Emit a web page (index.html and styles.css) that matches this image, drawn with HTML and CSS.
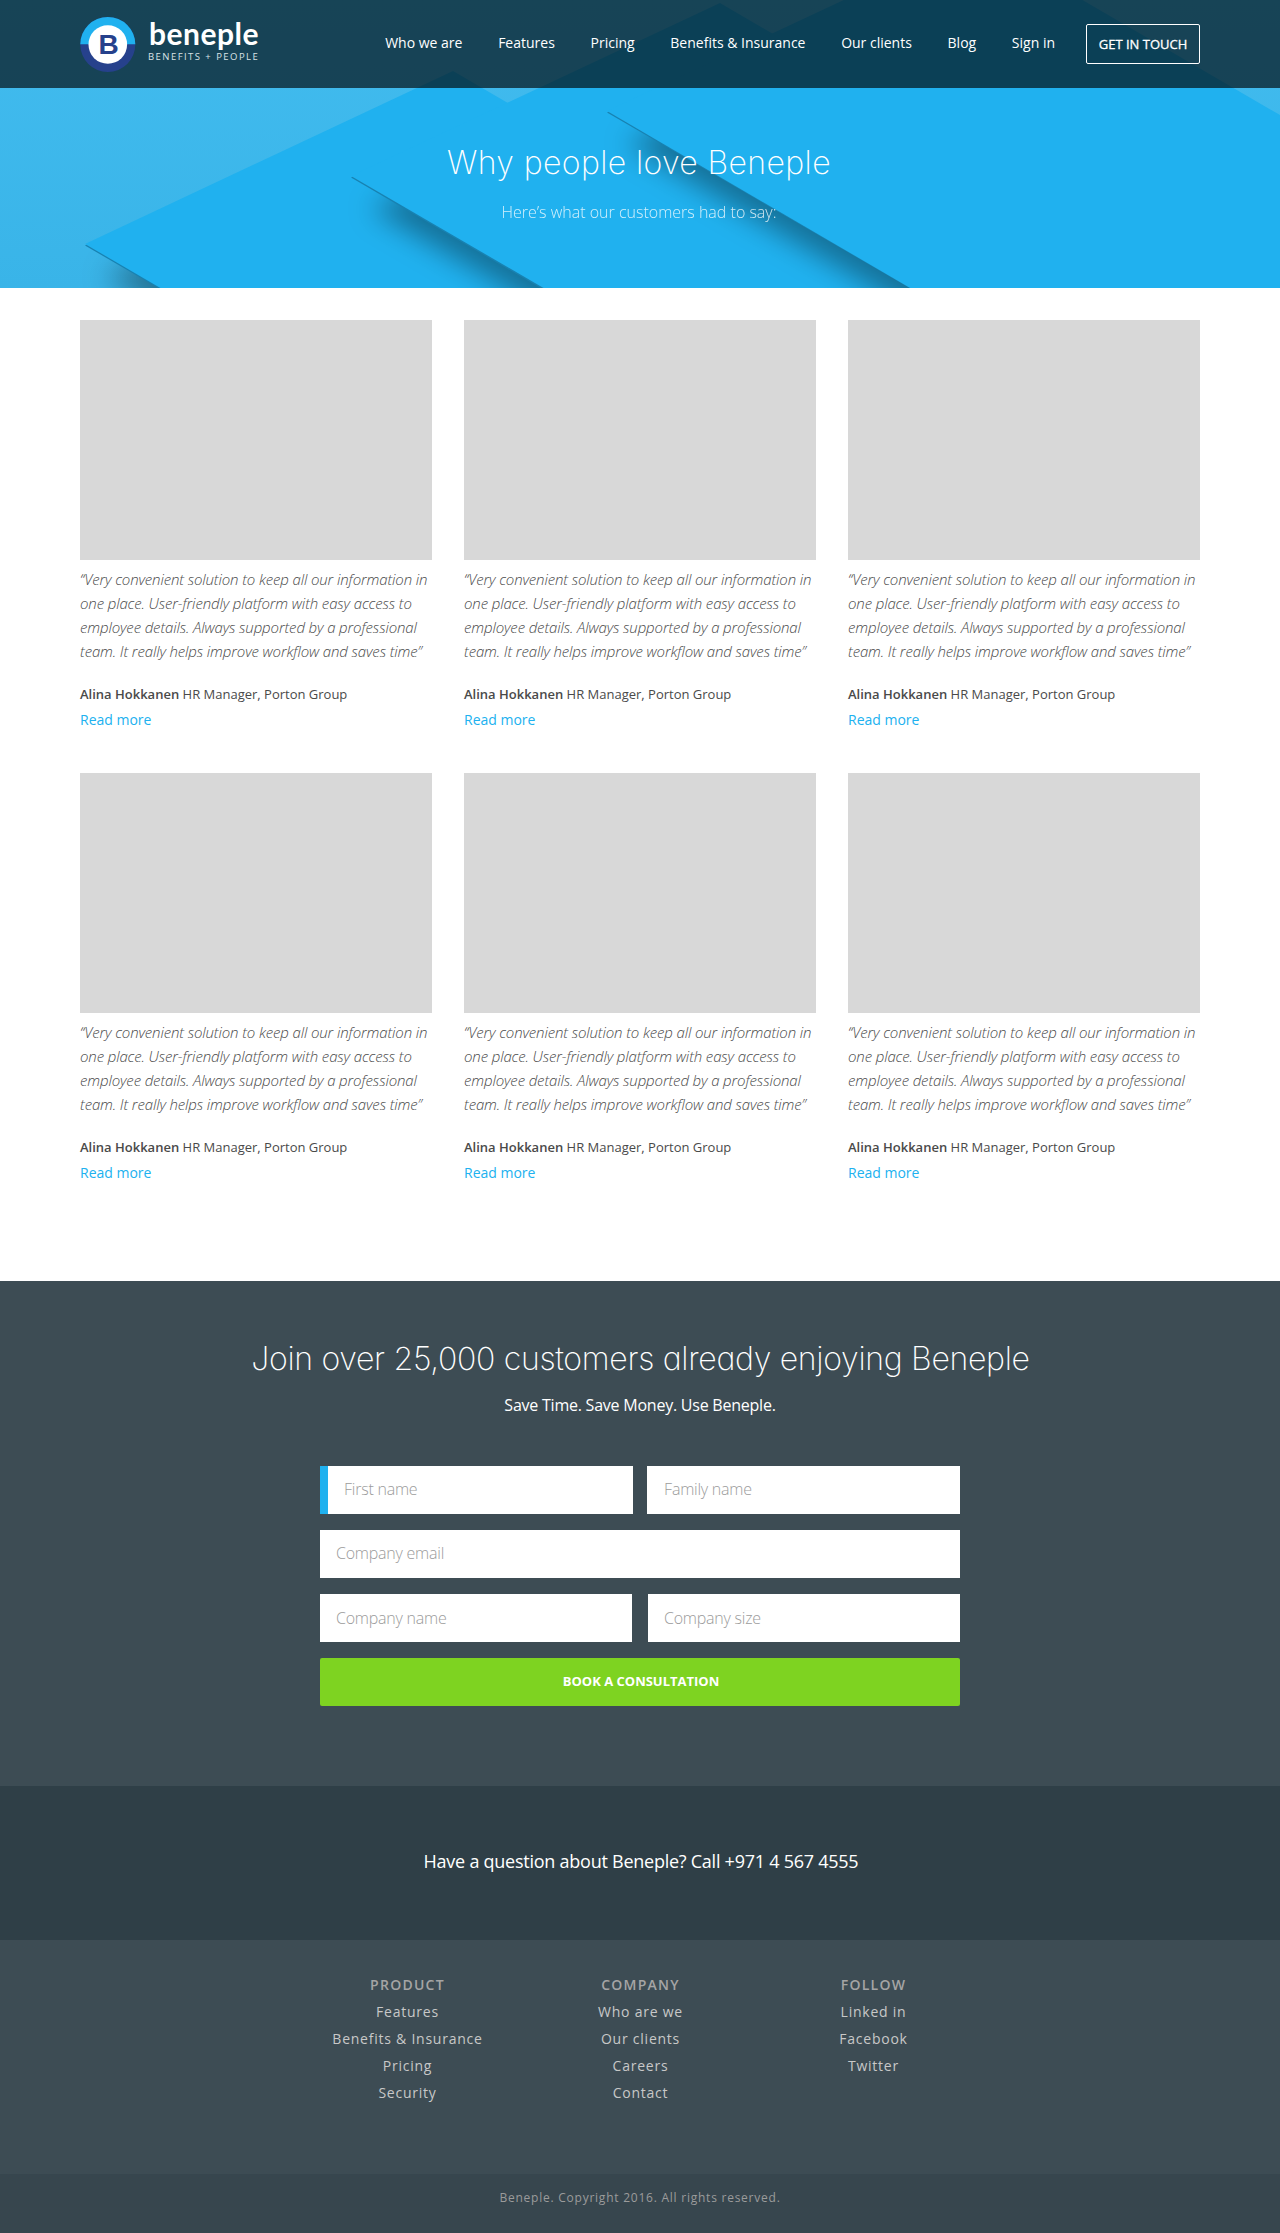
FILE: index.html
```html
<!DOCTYPE html>
<html lang="en">
<head>
<meta charset="utf-8">
<title>Beneple – Our clients</title>
<link rel="stylesheet" href="styles.css">
</head>
<body>
<header class="hero">
  <svg class="hero-art" width="1280" height="288" viewBox="0 0 1280 288" aria-hidden="true">
    <defs>
      <filter id="soft" x="-20%" y="-20%" width="140%" height="140%"><feGaussianBlur stdDeviation="14"/></filter>
      <linearGradient id="sky" x1="0" y1="0" x2="0" y2="1"><stop offset="0" stop-color="#42bcef"/><stop offset="1" stop-color="#39b4e8"/></linearGradient>
    </defs>
    <rect width="1280" height="288" fill="url(#sky)"/>
    <path class="shade" filter="url(#soft)" d="M104 276 L400 156 L700 400 L316 400Z"/>
    <path class="edge" d="M85 245.500 L453 72.500 L990 386 L327 386Z"/>
    <path class="sheet" d="M85 244 L453 71 L990 384 L325 384Z"/>
    <path class="shade" filter="url(#soft)" d="M370 208 L700 76 L1100 400 L699 400Z"/>
    <path class="edge" d="M351 177.500 L720 4.500 L1400 402 L736 402Z"/>
    <path class="sheet" d="M351 176 L720 3 L1400 400 L736 400Z"/>
    <path class="shade" filter="url(#soft)" d="M626 143 L900 36 L1300 400 L1066 400Z"/>
    <path class="edge" d="M607 112.500 L976 -60.500 L1400 187 L1400 402 L1106 402Z"/>
    <path class="sheet" d="M607 111 L976 -62 L1400 185 L1400 400 L1102 400Z"/>
  </svg>
  <div class="topbar">
    <a class="logo" href="#">
      <svg class="logo-mark" width="56" height="56" viewBox="0 0 56 56" aria-hidden="true">
        <circle cx="27.800" cy="28.500" r="27.500" fill="#26418c"/>
        <path d="M.3 28.300a27.500 27.300 0 0 1 55 0z" fill="#20b1ef"/>
        <circle cx="27.800" cy="28.500" r="19.300" fill="#fff"/>
        <text x="28.500" y="38" class="logo-b">B</text>
      </svg>
      <span class="logo-text"><span class="logo-name">beneple</span><span class="logo-tag">BENEFITS + PEOPLE</span></span>
    </a>
    <nav class="nav">
      <a href="#">Who we are</a><a href="#">Features</a><a href="#">Pricing</a><a href="#">Benefits &amp; Insurance</a><a href="#">Our clients</a><a href="#">Blog</a><a href="#">Sign in</a>
      <a class="nav-cta" href="#">GET IN TOUCH</a>
    </nav>
  </div>
  <div class="hero-copy">
    <h1>Why people love Beneple</h1>
    <p>Here’s what our customers had to say:</p>
  </div>
</header>
<main class="stories">
  <article class="story"><div class="photo"></div><blockquote>“Very convenient solution to keep all our information in one place. User-friendly platform with easy access to employee details. Always supported by a professional team. It really helps improve workflow and saves time”</blockquote><p class="author"><b>Alina Hokkanen</b> HR Manager, Porton Group</p><a class="more" href="#">Read more</a></article>
  <article class="story"><div class="photo"></div><blockquote>“Very convenient solution to keep all our information in one place. User-friendly platform with easy access to employee details. Always supported by a professional team. It really helps improve workflow and saves time”</blockquote><p class="author"><b>Alina Hokkanen</b> HR Manager, Porton Group</p><a class="more" href="#">Read more</a></article>
  <article class="story"><div class="photo"></div><blockquote>“Very convenient solution to keep all our information in one place. User-friendly platform with easy access to employee details. Always supported by a professional team. It really helps improve workflow and saves time”</blockquote><p class="author"><b>Alina Hokkanen</b> HR Manager, Porton Group</p><a class="more" href="#">Read more</a></article>
  <article class="story"><div class="photo"></div><blockquote>“Very convenient solution to keep all our information in one place. User-friendly platform with easy access to employee details. Always supported by a professional team. It really helps improve workflow and saves time”</blockquote><p class="author"><b>Alina Hokkanen</b> HR Manager, Porton Group</p><a class="more" href="#">Read more</a></article>
  <article class="story"><div class="photo"></div><blockquote>“Very convenient solution to keep all our information in one place. User-friendly platform with easy access to employee details. Always supported by a professional team. It really helps improve workflow and saves time”</blockquote><p class="author"><b>Alina Hokkanen</b> HR Manager, Porton Group</p><a class="more" href="#">Read more</a></article>
  <article class="story"><div class="photo"></div><blockquote>“Very convenient solution to keep all our information in one place. User-friendly platform with easy access to employee details. Always supported by a professional team. It really helps improve workflow and saves time”</blockquote><p class="author"><b>Alina Hokkanen</b> HR Manager, Porton Group</p><a class="more" href="#">Read more</a></article>
</main>
<section class="join">
  <h2>Join over 25,000 customers already enjoying Beneple</h2>
  <p>Save Time. Save Money. Use Beneple.</p>
  <form class="form">
    <div class="row row-first"><input class="active" placeholder="First name"><input placeholder="Family name"></div>
    <div class="row"><input placeholder="Company email"></div>
    <div class="row row-last"><input placeholder="Company name"><input placeholder="Company size"></div>
    <button type="button">BOOK A CONSULTATION</button>
  </form>
</section>
<section class="call">Have a question about Beneple? Call +971 4 567 4555</section>
<footer>
  <div class="links">
    <div class="col"><h3>PRODUCT</h3><a href="#">Features</a><a href="#">Benefits &amp; Insurance</a><a href="#">Pricing</a><a href="#">Security</a></div>
    <div class="col"><h3>COMPANY</h3><a href="#">Who are we</a><a href="#">Our clients</a><a href="#">Careers</a><a href="#">Contact</a></div>
    <div class="col"><h3>FOLLOW</h3><a href="#">Linked in</a><a href="#">Facebook</a><a href="#">Twitter</a></div>
  </div>
  <div class="legal">Beneple. Copyright 2016. All rights reserved.</div>
</footer>
</body>
</html>
```
FILE: styles.css
```css
* { box-sizing: border-box; }
body { margin: 0; font-family: "Open Sans", "Noto Sans", sans-serif; color: #4a4a4a; background: #fff; }
a { color: inherit; text-decoration: none; }
h1, h2, h3, p, blockquote { margin: 0; }

/* Hero */
.hero { position: relative; height: 288px; overflow: hidden; color: #fff; }
.hero-art { position: absolute; top: 0; left: 0; }
.shade { fill: #000; fill-opacity: .36; }
.edge { fill: #1882b1; }
.sheet { fill: #20b1ef; }
.topbar { position: relative; height: 88px; padding: 0 80px; display: flex; justify-content: space-between; background: rgba(0, 0, 0, .64); }
.logo { display: flex; padding-top: 16px; }
.logo-mark { display: block; }
.logo-b { font: bold 28px "Liberation Sans", sans-serif; fill: #26418c; text-anchor: middle; }
.logo-text { display: flex; flex-direction: column; padding-left: 12px; }
.logo-name { padding-left: 1px; font: 700 30px/34px Lato, sans-serif; letter-spacing: .5px; }
.logo-tag { margin-top: 1px; font-size: 9.500px; line-height: 12px; letter-spacing: 1.450px; color: #d9e2e6; white-space: nowrap; }
.nav { display: flex; align-items: flex-start; font-size: 14px; line-height: 20px; padding-top: 24px; white-space: nowrap; }
.nav a { margin: 9px 35.700px 0 0; }
.nav .nav-cta { margin: 0 0 0 -4.700px; width: 114px; height: 40px; border: 1px solid #fff; border-radius: 2px; font-size: 13px; line-height: 39px; text-align: center; -webkit-text-stroke: .3px #fff; }
.hero-copy { position: relative; padding-top: 53px; text-align: center; }
h1, h2 { font-family: Inter, "Open Sans", sans-serif; font-weight: 200; font-size: 32px; line-height: 44px; font-feature-settings: "cv11"; }
h1 { padding-right: 2px; letter-spacing: .38px; }
h2 { padding-left: 1px; letter-spacing: -.3px; }
.hero-copy p { margin: 16px 2px 0 0; font-size: 16px; line-height: 22px; font-weight: 300; opacity: .8; }

/* Testimonials */
.stories { height: 993px; padding: 32px 80px 0; display: grid; grid-template-columns: repeat(3, 352px); grid-template-rows: 453px 453px; column-gap: 32px; align-content: start; }
.photo { height: 240px; background: #d8d8d8; }
.story blockquote { margin-top: 7px; font-size: 15px; line-height: 24px; font-weight: 300; font-style: italic; letter-spacing: -.13px; font-feature-settings: "liga"; }
.author { margin-top: 20px; font-size: 13px; line-height: 22px; }
.author b { font-weight: 600; }
.more { display: block; margin-top: 4px; font-size: 14px; line-height: 22px; color: #20b1ef; }

/* Sign-up */
.join { height: 505px; padding-top: 56px; background: #3d4c54; color: #fff; text-align: center; }
.join p { margin-top: 13px; font-size: 16px; line-height: 22px; letter-spacing: -.23px; }
.form { width: 640px; margin: 50px auto 0; display: flex; flex-direction: column; gap: 16px; }
.row { display: flex; gap: 16px; }
.row-first { gap: 14px; }
.row input { flex: 1 1 50%; min-width: 0; height: 48px; padding: 0 16px 2px; border: 0; border-radius: 0; background: #fff; font: 300 16px "Open Sans", sans-serif; letter-spacing: -.23px; }
.row-first input + input { padding-left: 17px; }
.row-last input { padding-bottom: 0; }
.row input::placeholder { color: #9b9b9b; opacity: 1; }
.row .active { border-left: 8px solid #20b1ef; }
.form button { height: 48px; padding: 0 0 2px 2px; border: 0; border-radius: 2px; background: #7ed321; color: #fff; font: 700 13px "Open Sans", sans-serif; }
.call { height: 154px; padding-left: 2px; background: #2f3f47; color: #fff; font-size: 18px; line-height: 151px; letter-spacing: -.25px; text-align: center; }

/* Footer */
footer { background: #3d4c54; color: #c8c8c8; text-align: center; letter-spacing: .76px; }
.links { height: 234px; padding: 31px 0 0 1px; display: grid; grid-template-columns: repeat(3, 233px); justify-content: center; }
.col { display: flex; flex-direction: column; font-size: 14px; line-height: 27px; }
.col h3 { font-size: 14px; line-height: 27px; font-weight: 600; letter-spacing: 1.250px; color: #a5a5a5; }
.legal { height: 59px; background: #37464e; color: #9b9b9b; font-size: 12px; line-height: 47px; }
```
